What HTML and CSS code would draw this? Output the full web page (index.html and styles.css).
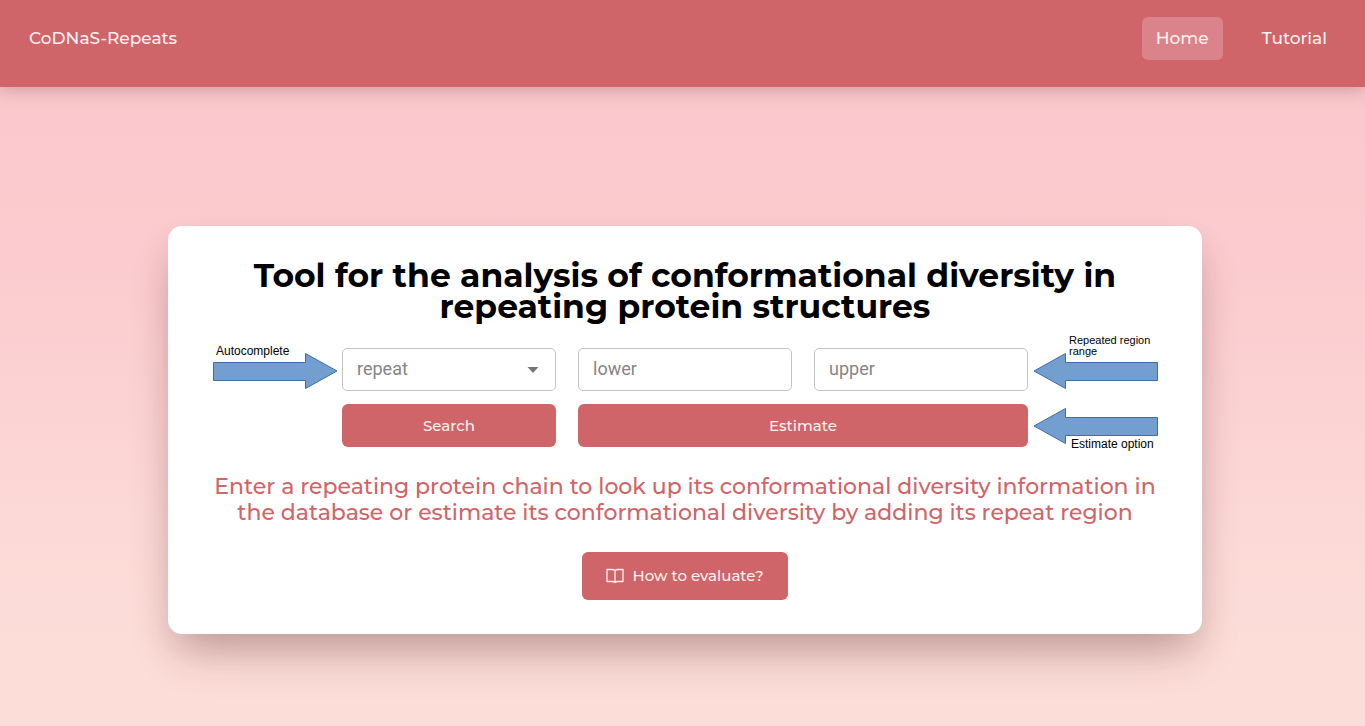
FILE: index.html
```html
<!DOCTYPE html>
<html lang="en">
<head>
<meta charset="utf-8">
<meta name="viewport" content="width=device-width, initial-scale=1">
<title>CoDNaS-Repeats</title>
<link rel="stylesheet" href="styles.css">
</head>
<body>
<header class="topbar">
  <a class="brand" href="#">CoDNaS-Repeats</a>
  <nav class="nav">
    <a class="nav-link active" href="#">Home</a>
    <a class="nav-link" href="#">Tutorial</a>
  </nav>
</header>
<main class="page">
  <section class="card">
    <h1 class="title">Tool for the analysis of conformational diversity in repeating protein structures</h1>
    <form class="search">
      <div class="field select-field">
        <select class="control" aria-label="repeat"><option>repeat</option></select>
        <svg class="caret" viewBox="0 0 12 6" aria-hidden="true"><path d="M.5 0h11L6 6z"/></svg>
      </div>
      <input class="control" type="text" placeholder="lower" aria-label="lower">
      <input class="control" type="text" placeholder="upper" aria-label="upper">
      <button class="btn" type="button">Search</button>
      <button class="btn wide" type="button">Estimate</button>

      <div class="callout callout-auto">
        <span class="callout-text">Autocomplete</span>
        <svg class="arrow" viewBox="0 0 125 36"><path d="M.5 9.500h92V.5L124 18 92.500 35.500v-8H.5z"/></svg>
      </div>
      <div class="callout callout-range">
        <span class="callout-text small">Repeated region range</span>
        <svg class="arrow" viewBox="0 0 125 36"><path d="M124.500 9.500h-92V.5L1 18l31.500 17.500v-8h92z"/></svg>
      </div>
      <div class="callout callout-estimate">
        <svg class="arrow" viewBox="0 0 125 36"><path d="M124.500 9.500h-92V.5L1 18l31.500 17.500v-8h92z"/></svg>
        <span class="callout-text">Estimate option</span>
      </div>
    </form>
    <p class="intro">Enter a repeating protein chain to look up its conformational diversity information in the database or estimate its conformational diversity by adding its repeat region</p>
    <button class="btn help" type="button">
      <svg class="book" viewBox="0 0 18 16" aria-hidden="true"><path d="M9 2.500Q8 1.500 6 1.500H1v12h5Q8 13.500 9 14.500q1-1 3-1H17v-12h-5Q10 1.500 9 2.500zV14.500"/></svg>
      How to evaluate?
    </button>
  </section>
</main>
</body>
</html>
```
FILE: styles.css
```css
* { box-sizing: border-box; }

body {
  margin: 0;
  min-height: 100vh;
  display: flex;
  flex-direction: column;
  font-family: Montserrat, Inter, sans-serif;
  background: linear-gradient(#fac8cc 12%, #fbcccf 38%, #fcdcd8 82%, #fcded8);
}

.topbar {
  display: flex;
  justify-content: space-between;
  align-items: flex-start;
  padding: 17px 24px 27px 29px;
  background: #cf6469;
  box-shadow: 0 2px 16px rgba(90, 40, 40, 0.3);
  font-size: 17px;
  font-weight: 500;
  line-height: 43px;
}

.brand, .nav-link { color: #fff0ef; text-decoration: none; }
.nav { display: flex; gap: 25px; }
.nav-link { padding: 0 14px; border-radius: 6px; }
.nav-link.active { background: #db838a; }

.page {
  flex: 1;
  padding: 139px 163px 92px 168px;
}

.card {
  display: flex;
  flex-direction: column;
  align-items: center;
  padding: 34px 42px;
  border-radius: 14px;
  background: #fff;
  box-shadow: 0 26px 48px -12px rgba(80, 30, 30, 0.32), 0 14px 28px rgba(80, 30, 30, 0.08);
  text-align: center;
}

.title {
  margin: 0;
  max-width: 900px;
  font-size: 33px;
  font-weight: 700;
  line-height: 31px;
  color: #000;
}

.search {
  position: relative;
  width: 100%;
  max-width: 686px;
  margin-top: 26px;
  display: grid;
  grid-template-columns: repeat(3, minmax(0, 1fr));
  gap: 13px 22px;
}

.field { position: relative; display: flex; }

.control {
  width: 100%;
  height: 43px;
  padding: 0 14px 2px;
  border: 1px solid #c4c4c4;
  border-radius: 5px;
  background: #fff;
  color: #858585;
  font: 400 18px Roboto, sans-serif;
  appearance: none;
}
.control::placeholder { color: #858585; opacity: 1; }

.caret {
  position: absolute;
  right: 17px;
  top: 19px;
  width: 12px;
  height: 6px;
  fill: #757575;
  pointer-events: none;
}

.btn {
  height: 43px;
  border: 0;
  border-radius: 6px;
  background: #cf6469;
  color: #fff0ef;
  font: inherit;
  font-size: 15px;
  font-weight: 500;
}
.wide { grid-column: span 2; }

.callout {
  position: absolute;
  width: 125px;
  display: flex;
  flex-direction: column;
  font-family: "Liberation Sans", Arial, sans-serif;
  font-size: 12px;
  line-height: 12px;
  text-align: left;
  color: #000;
}
.callout-auto { right: calc(100% + 4px); top: -3px; }
.callout-range { left: calc(100% + 5px); top: -13px; }
.callout-estimate { left: calc(100% + 5px); top: 60px; }

.callout-text { position: relative; z-index: 1; white-space: nowrap; }
.callout-auto .callout-text { padding-left: 3px; margin-bottom: -4px; }
.callout-range .callout-text { padding-left: 36px; margin-bottom: -4px; }
.callout-estimate .callout-text { padding-left: 38px; margin-top: -6px; }
.callout .small { font-size: 11px; line-height: 11px; white-space: normal; }

.arrow {
  width: 125px;
  height: 36px;
  fill: #729fcf;
  stroke: #3f6da8;
}

.intro {
  margin: 27px 0 0;
  max-width: 948px;
  font-size: 22px;
  font-weight: 500;
  line-height: 26px;
  color: #cf6469;
}

.help {
  display: flex;
  align-items: center;
  gap: 8px;
  height: 48px;
  margin-top: 26px;
  padding: 0 24px 1px;
}

.book {
  width: 18px;
  height: 16px;
  fill: none;
  stroke: currentColor;
  stroke-width: 1.3;
  stroke-linejoin: round;
}
```
